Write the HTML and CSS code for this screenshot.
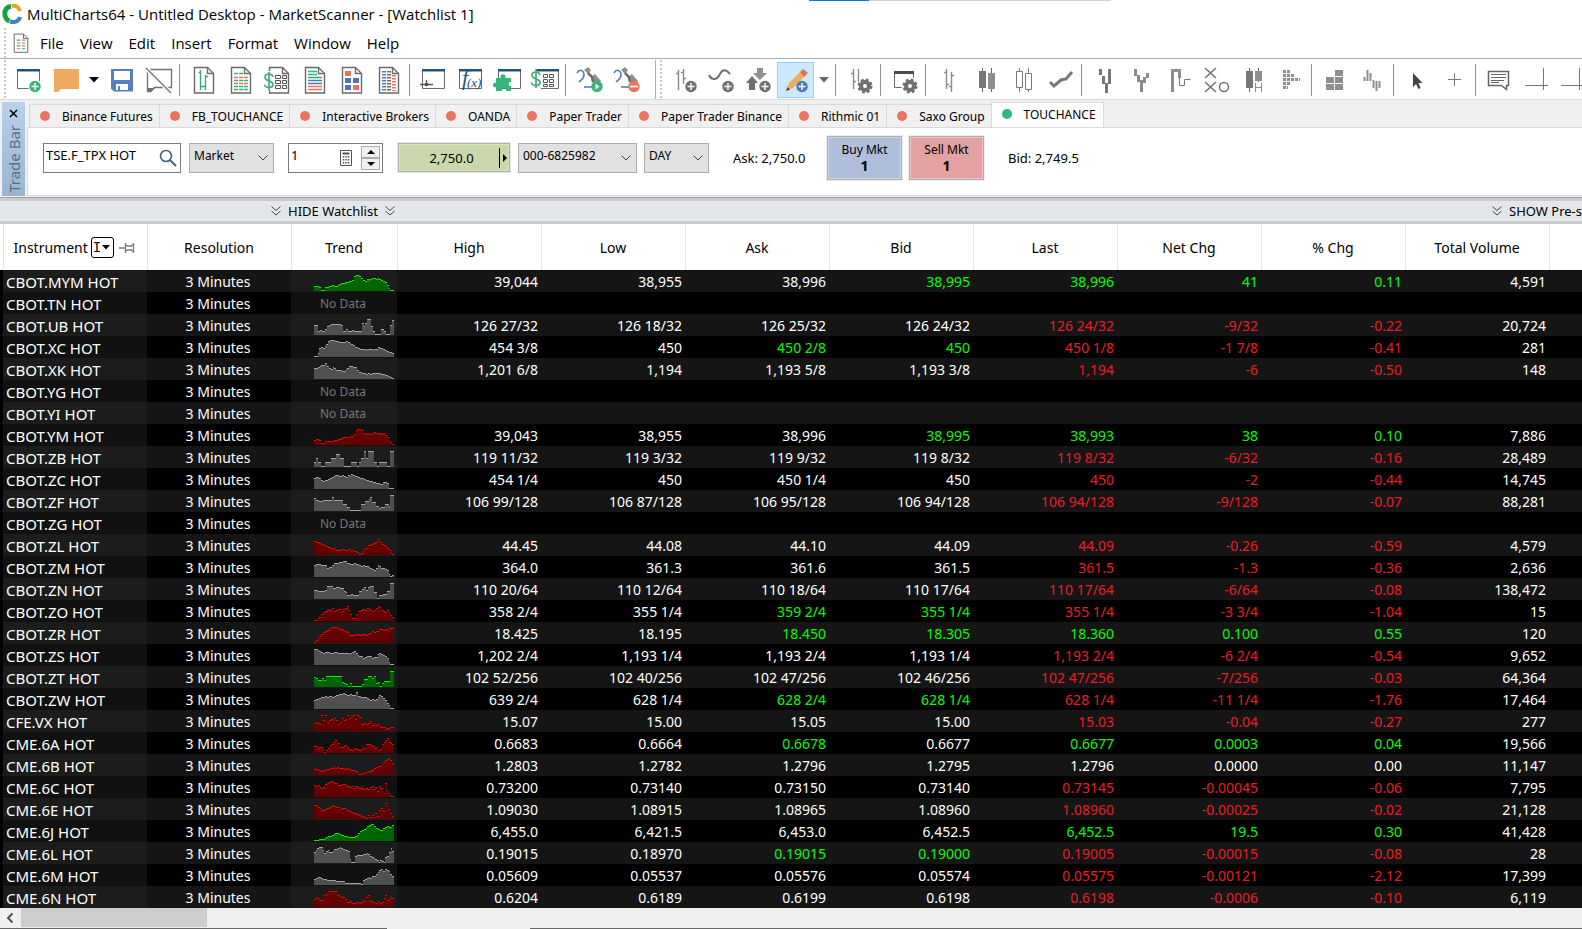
FILE: index.html
```html
<!DOCTYPE html>
<html lang="en">
<head>
    <meta charset="UTF-8">
    <meta name="viewport" content="width=device-width, initial-scale=1.0">
    <title>MultiCharts64 - Untitled Desktop</title>
    <link rel="stylesheet" href="styles.css">
</head>
<body>
    <svg class="defs" aria-hidden="true">
        <symbol id="page" viewBox="0 0 28 28">
            <path d="M4.5 1.5h13l6 6v19.5h-19z" fill="#fff" stroke="#6a6a6a" stroke-width="1.4"/>
            <path d="M17.5 1.5v6h6" fill="none" stroke="#6a6a6a" stroke-width="1.4"/>
        </symbol>
        <symbol id="window" viewBox="0 0 28 28">
            <path d="M2.5 4v18.500h22V4" fill="#fff" stroke="#6a6a6a"/>
            <path d="M2 3h23v2.500H2z" fill="#245374"/>
        </symbol>
        <symbol id="plus" viewBox="0 0 28 28">
            <circle cx="20" cy="20.500" r="5.700"/>
            <path d="M20 17v7M16.500 20.500h7" stroke="#fff" stroke-width="1.400"/>
        </symbol>
        <symbol id="gear" viewBox="0 0 28 28">
            <circle cx="19" cy="20" r="4" fill="none" stroke="#707070" stroke-width="4"/>
            <circle cx="19" cy="20" r="6" fill="none" stroke="#707070" stroke-width="3" stroke-dasharray="2.700 2"/>
        </symbol>
        <symbol id="bars" viewBox="0 0 28 28">
            <path d="M10.500 3v20M15.500 6v20M8 6.500h2M11 18.500h2M13 20.500h2M16 9.500h2" fill="none" stroke="#8a8a8a" stroke-width="1.400"/>
        </symbol>
        <symbol id="binoculars" viewBox="0 0 28 28">
            <path d="M8 4l4-3 3 3-3 4zM15 11l4-3 6 7-3 4-5-2z" fill="#8e8e8e"/>
            <path d="M12 7l4 4 1 5" fill="none" stroke="#6a6a6a" stroke-width="2.500"/>
            <path d="M1 7c3-5 7-2 7 2s-3 5-5 7M8 21h9" fill="none" stroke="#4f76b5" stroke-width="1.500"/>
        </symbol>
        <symbol id="chevrons" viewBox="0 0 12 12">
            <path d="M1.500 1.500L6 5.500l4.500-4M1.500 6L6 10l4.500-4" fill="none" stroke="#444"/>
        </symbol>
    </svg>

    <header class="titlebar">
        <svg class="logo" viewBox="0 0 20 20">
            <path d="M9 2.500C1 3 1 14.500 7.500 17" fill="none" stroke="#17a33b" stroke-width="5"/>
            <path d="M10 2c4-1 7 1.500 8 5" fill="none" stroke="#f39a25" stroke-width="4"/>
            <path d="M8 17.500c5 1.500 9-.5 10-4.500" fill="none" stroke="#3f83cc" stroke-width="4"/>
        </svg>
        <h1>MultiCharts64 - Untitled Desktop - MarketScanner - [Watchlist 1]</h1>
        <span class="dock-hint"></span>
    </header>

    <nav class="menubar">
        <span class="grip"></span>
        <svg class="doc" viewBox="0 0 28 28"><use href="#page"/><path d="M8 10h5M8 18h5M15 14h5M15 22h5" stroke="#2fb573" stroke-width="1.500"/><path d="M15 10h5M15 18h5M8 14h5M8 22h5" stroke="#e8735c" stroke-width="1.500"/></svg>
        <button>File</button>
        <button>View</button>
        <button>Edit</button>
        <button>Insert</button>
        <button>Format</button>
        <button>Window</button>
        <button>Help</button>
    </nav>

    <div class="toolbars">
        <div class="toolbar">
            <span class="grip"></span>
            <button class="tool" aria-label="New"><svg viewBox="0 0 28 28"><use href="#window"/><circle cx="20" cy="20.500" r="7" fill="#fff"/><use href="#plus" fill="#35b57a"/></svg></button>
            <button class="tool" aria-label="Open"><svg viewBox="0 0 28 28"><path d="M2 3h25v20H9l-3 3H2z" fill="#eeab60"/></svg></button>
            <button class="tool drop" aria-label="Open recent"><svg viewBox="0 0 10 6"><path d="M0 0h10L5 5.500z" fill="#000"/></svg></button>
            <button class="tool" aria-label="Save"><svg viewBox="0 0 28 28"><path d="M3 3h22v22.500H6l-3-3z" fill="#5580bd"/><path d="M6 5h16v9H6zM8 18h12v6H8z" fill="#fff"/><path d="M10 20h2v4h-2z" fill="#5580bd"/></svg></button>
            <button class="tool" aria-label="Close desktop"><svg viewBox="0 0 28 28"><path d="M2.500 3.500h24v18h-17l-4 4h-3z" fill="none" stroke="#707070" stroke-width="1.300"/><path d="M3 22h7l-4 4H3z" fill="#707070"/><path d="M1 2l25 25" stroke="#fff" stroke-width="4"/><path d="M1 2l25 25" stroke="#707070" stroke-width="1.300"/></svg></button>
            <span class="sep"></span>
            <button class="tool" aria-label="Chart"><svg viewBox="0 0 28 28"><use href="#page"/><path d="M10.500 4v20M15.500 9v15M8.500 6.500h2M11 20.500h2M13 20.500h2M16 10.500h2" stroke="#2fa873" stroke-width="1.300"/></svg></button>
            <button class="tool" aria-label="Scanner"><svg viewBox="0 0 28 28"><use href="#page"/><path d="M7 7.500h9M7 14.500h14M7 20.500h14M7 23.500h14" stroke="#2fb573" stroke-dasharray="4 1" stroke-width="1.500"/><path d="M7 11.500h14M7 17.500h14" stroke="#e8735c" stroke-dasharray="4 1" stroke-width="1.500"/></svg></button>
            <button class="tool" aria-label="Depth of market"><svg viewBox="0 0 28 28"><use href="#page" x="1"/><path d="M0 5h10v19H0z" fill="#fff"/><path d="M11.500 9.500h5v3h-5zM18.500 9.500h4v3h-4zM11.500 14.500h5v3h-5zM18.500 14.500h4v3h-4zM11.500 19.500h5v3h-5zM18.500 19.500h4v3h-4z" fill="none" stroke="#555"/><path d="M9 11c-1-4-8-4-8 0 0 5 8 3 8 7.500 0 4-8 4-8.500 0M5 6v18" fill="none" stroke="#44ac79" stroke-width="1.700"/></svg></button>
            <button class="tool" aria-label="Time and sales"><svg viewBox="0 0 28 28"><use href="#page"/><path d="M7 5.500h9M7 8.500h9M7 11.500h14" stroke="#2fb573" stroke-width="1.500"/><path d="M7 14.500h14M7 17.500h14" stroke="#4f76b5" stroke-width="1.500"/><path d="M7 20.500h14M7 23.500h14" stroke="#e8735c" stroke-width="1.500"/></svg></button>
            <button class="tool" aria-label="Portfolio"><svg viewBox="0 0 28 28"><use href="#page"/><path d="M7 5h6v5H7zM15 19h6v5h-6z" fill="#ea745c"/><path d="M7 12h6v5H7zM15 12h6v5h-6zM7 19h6v5H7z" fill="#4f76b5"/></svg></button>
            <button class="tool" aria-label="Order tracker"><svg viewBox="0 0 28 28"><use href="#page"/><g stroke-width="4" stroke-dasharray="1.500 1.500"><path d="M9 5v20" stroke="#4f76b5"/><path d="M14 5v20" stroke="#666"/><path d="M19 9v16" stroke="#e8735c"/></g></svg></button>
            <span class="sep"></span>
            <button class="tool" aria-label="Quote"><svg viewBox="0 0 28 28"><use href="#window"/><path d="M0 18.500h13M6.500 14v6" stroke="#555" stroke-width="1.300"/><circle cx="6.500" cy="18.500" r="1.800" fill="#245374"/></svg></button>
            <button class="tool" aria-label="Function"><svg viewBox="0 0 28 28"><use href="#window"/><text x="5" y="19" class="fx">f</text><text x="10" y="21" class="fx small">(x)</text></svg></button>
            <button class="tool" aria-label="Plugin"><svg viewBox="0 0 28 28"><use href="#window" x="2"/><path d="M2 12h5c-3-5 7-5 4 0h6v4c-3-1-3 5 0 4v5h-5c1-4-5-4-4 0H2v-4c-4 2-4-6 0-4z" fill="#35b57a"/></svg></button>
            <button class="tool" aria-label="Order entry"><svg viewBox="0 0 28 28"><use href="#window" x="3"/><path d="M0 6h10v18H0z" fill="#fff"/><path d="M12.500 8.500h4v3h-4zM18.500 8.500h4v3h-4zM12.500 13.500h4v3h-4zM18.500 13.500h4v3h-4zM12.500 18.500h4v2h-4zM18.500 18.500h4v2h-4z" fill="none" stroke="#555"/><path d="M9 9c-1-4-8-4-8 0 0 5 8 3 8 7.500 0 4-8 4-8.500 0M5 3v19" fill="none" stroke="#44ac79" stroke-width="1.700"/></svg></button>
            <span class="sep"></span>
            <button class="tool" aria-label="Start scan"><svg viewBox="0 0 28 28"><use href="#binoculars"/><circle cx="21" cy="20.500" r="5.700" fill="#35b57a"/><path d="M19.500 17.500v6l4-3z" fill="#fff"/></svg></button>
            <button class="tool" aria-label="Stop scan"><svg viewBox="0 0 28 28"><use href="#binoculars"/><circle cx="21" cy="20.500" r="5.700" fill="#ea745c"/><path d="M17 20.500h8" stroke="#fff" stroke-width="1.600"/></svg></button>
        </div>
        <div class="toolbar second">
            <span class="grip"></span>
            <button class="tool" aria-label="Add instrument"><svg viewBox="0 0 28 28"><path d="M7.500 4v20M12.500 3v15M5 7.500h2M10 6.500h2M13 12.500h2" stroke="#8a8a8a" stroke-width="1.400"/><use href="#plus" fill="#707070"/></svg></button>
            <button class="tool" aria-label="Add study"><svg viewBox="0 0 28 28"><path d="M1 9c3 6 8 5 11-1s7-4 10 0" fill="none" stroke="#707070" stroke-width="2"/><use href="#plus" fill="#707070"/></svg></button>
            <button class="tool" aria-label="Add signal"><svg viewBox="0 0 28 28"><path d="M12 2h6v5h4l-7 7-7-7h4z" fill="#909090"/><path d="M1 17l6-7 6 7h-3v7H4v-7z" fill="#707070"/><circle cx="20" cy="20.500" r="6.500" fill="#fff"/><use href="#plus" fill="#707070"/></svg></button>
            <button class="tool active" aria-label="Drawing"><svg viewBox="0 0 28 28"><path d="M4 25l3-8L18 6l4 5-11 11z" fill="#efad62"/><path d="M18 6l3-3 5 4-4 4z" fill="#ea6d57"/><path d="M4 25l1.500-4 2.500 2.500z" fill="#444"/><use href="#plus" fill="#4f76b5"/></svg></button>
            <button class="tool drop" aria-label="Drawing tools"><svg viewBox="0 0 10 6"><path d="M0 0h10L5 5.500z" fill="#666"/></svg></button>
            <span class="sep"></span>
            <button class="tool" aria-label="Format instrument"><svg viewBox="0 0 28 28"><path d="M7.500 3v20M12.500 3v13M5 7.500h2M8 15.500h2" stroke="#8a8a8a" stroke-width="1.400"/><use href="#gear"/></svg></button>
            <span class="sep"></span>
            <button class="tool" aria-label="Format window"><svg viewBox="0 0 28 28"><path d="M3.500 6v15.500h7M22.500 6v6" fill="none" stroke="#666"/><path d="M3 5h20v3H3z" fill="#4b4b4b"/><use href="#gear"/></svg></button>
            <span class="sep"></span>
            <button class="tool" aria-label="Bars"><svg viewBox="0 0 28 28"><use href="#bars"/></svg></button>
            <button class="tool" aria-label="Candles"><svg viewBox="0 0 28 28"><path d="M9.500 2v24M18.500 2v24" stroke="#666"/><path d="M6 5h7v17H6z" fill="#777"/><path d="M15 7h7v16h-7z" fill="#8e8e8e"/></svg></button>
            <button class="tool" aria-label="Hollow candles"><svg viewBox="0 0 28 28"><path d="M9.500 2v24M18.500 2v24" stroke="#777"/><path d="M6.500 5.500h6v16h-6zM15.500 7.500h6v16h-6z" fill="#fff" stroke="#777"/></svg></button>
            <button class="tool" aria-label="Line"><svg viewBox="0 0 28 28"><path d="M3 16l4 4 7-6 5-1 6-7" fill="none" stroke="#777" stroke-width="3"/></svg></button>
            <span class="sep"></span>
            <button class="tool" aria-label="Kagi"><svg viewBox="0 0 28 28"><path d="M8.500 3v6M11.500 10v8M14.500 17v10M17.500 3v15" stroke="#777" stroke-width="3"/></svg></button>
            <button class="tool" aria-label="Line break"><svg viewBox="0 0 28 28"><path d="M6.500 3v7M9.500 9v7M12.500 14v12M15.500 11v6M18.500 7v5" stroke="#8a8a8a" stroke-width="3"/></svg></button>
            <button class="tool" aria-label="Renko"><svg viewBox="0 0 28 28"><path d="M6.500 26V4.500h7V12" fill="none" stroke="#8e8e8e" stroke-width="3"/><path d="M13.500 12v7.500h5v-6h6" fill="none" stroke="#777"/></svg></button>
            <button class="tool" aria-label="Point and figure"><svg viewBox="0 0 28 28"><path d="M2 2l11 10M13 2L2 12M2 16l11 10M13 16L2 26" stroke="#707070" stroke-width="1.500"/><circle cx="21" cy="21" r="4.500" fill="none" stroke="#707070" stroke-width="1.500"/></svg></button>
            <button class="tool" aria-label="Heikin-Ashi"><svg viewBox="0 0 28 28"><path d="M9.500 2v24M18.500 2v14" stroke="#666"/><path d="M6 5h7v17H6z" fill="#777"/><path d="M15 5h7v10h-7z" fill="#8e8e8e"/><path d="M15.500 17v9M21.500 17v9M15.500 21.500h6" stroke="#8e8e8e"/></svg></button>
            <button class="tool" aria-label="Volume profile"><svg viewBox="0 0 28 28"><g stroke="#8e8e8e" stroke-width="3" stroke-dasharray="3 1"><path d="M6 5.500h8M6 9.500h12M6 13.500h17M6 17.500h8M6 21.500h5"/></g></svg></button>
            <span class="sep"></span>
            <button class="tool" aria-label="Arrange"><svg viewBox="0 0 28 28"><path d="M13 4h8v6h-8zM4 11h8v6H4zM13 11h8v6h-8zM4 18h8v6H4zM13 18h8v6h-8z" fill="#8e8e8e"/></svg></button>
            <button class="tool" aria-label="Compress"><svg viewBox="0 0 28 28"><path d="M5.500 11v4M8.500 4v11M11.500 7v8M14.500 14v8M17.500 15v10M20.500 15v7" stroke="#8e8e8e" stroke-width="2"/></svg></button>
            <span class="sep"></span>
            <button class="tool" aria-label="Pointer"><svg viewBox="0 0 28 28"><path d="M9 7v14l3-3 2.500 5 2-1-2-5h4z" fill="#444"/></svg></button>
            <button class="tool" aria-label="Crosshair"><svg viewBox="0 0 28 28"><path d="M13.500 7v13M7 13.500h13" stroke="#777"/></svg></button>
            <span class="sep"></span>
            <button class="tool" aria-label="Note"><svg viewBox="0 0 28 28"><path d="M2.500 5.500h20v14h-2v4l-5-4h-13z" fill="none" stroke="#666" stroke-width="1.500"/><path d="M5 8.500h15M5 11.500h15M5 14.500h13M5 16.500h8" stroke="#666"/></svg></button>
            <button class="tool" aria-label="Price line"><svg viewBox="0 0 28 28"><path d="M2 19.500h23M20.500 2v22" stroke="#777"/></svg></button>
            <button class="tool" aria-label="Time line"><svg viewBox="0 0 28 28"><path d="M1 19.500h24M19.500 2v22" stroke="#777"/></svg></button>
        </div>
    </div>

    <section class="tradebar">
        <div class="side">
            <button aria-label="Close trade bar"><svg viewBox="0 0 9 9"><path d="M1 1l7 7M8 1L1 8" stroke="#000" stroke-width="1.500"/></svg></button>
            <span>Trade Bar</span>
        </div>
        <div class="trade">
            <div class="tabs" role="tablist">
                <button class="tab" role="tab">Binance Futures</button>
                <button class="tab" role="tab">FB_TOUCHANCE</button>
                <button class="tab" role="tab">Interactive Brokers</button>
                <button class="tab" role="tab">OANDA</button>
                <button class="tab" role="tab">Paper Trader</button>
                <button class="tab" role="tab">Paper Trader Binance</button>
                <button class="tab" role="tab">Rithmic 01</button>
                <button class="tab" role="tab">Saxo Group</button>
                <button class="tab online" role="tab" aria-selected="true">TOUCHANCE</button>
            </div>
            <form class="order">
                <div class="field symbol">
                    <input type="text" value="TSE.F_TPX HOT" aria-label="Symbol">
                    <svg viewBox="0 0 18 18"><circle cx="7" cy="7" r="5.500" fill="none" stroke="#3f6384" stroke-width="1.600"/><path d="M11 11l6 6" stroke="#3f6384" stroke-width="2"/></svg>
                </div>
                <select class="type" aria-label="Order type"><option>Market</option></select>
                <div class="field qty">
                    <input type="text" value="1" aria-label="Quantity">
                    <svg class="calc" viewBox="0 0 12 16"><path d="M.5.5h11v15H.5z" fill="#fff" stroke="#555"/><path d="M2.500 3.500h7" stroke="#555" stroke-width="2"/><path d="M3.500 6v8M6 6v8M8.500 6v8" stroke="#555" stroke-width="1.500" stroke-dasharray="1.500 1.500"/></svg>
                    <div class="spin">
                        <button type="button" aria-label="Increase"><svg viewBox="0 0 8 4"><path d="M4 0l4 4H0z"/></svg></button>
                        <button type="button" aria-label="Decrease"><svg viewBox="0 0 8 4"><path d="M4 4l4-4H0z"/></svg></button>
                    </div>
                </div>
                <button type="button" class="price"><span>2,750.0</span><svg viewBox="0 0 8 20"><path d="M.5 0v20" stroke="#000"/><path d="M4 6l4 4-4 4z"/></svg></button>
                <select class="account" aria-label="Account"><option>000-6825982</option></select>
                <select class="tif" aria-label="Time in force"><option>DAY</option></select>
                <span class="quote">Ask: 2,750.0</span>
                <button type="button" class="mkt buy">Buy Mkt<b>1</b></button>
                <button type="button" class="mkt sell">Sell Mkt<b>1</b></button>
                <span class="quote last">Bid: 2,749.5</span>
            </form>
        </div>
    </section>

    <div class="panelbar">
        <button class="hide-list"><svg viewBox="0 0 12 12"><use href="#chevrons"/></svg>HIDE Watchlist<svg viewBox="0 0 12 12"><use href="#chevrons"/></svg></button>
        <button><svg viewBox="0 0 12 12"><use href="#chevrons"/></svg>SHOW Pre-s</button>
    </div>

    <main class="watchlist">
        <table>
            <colgroup>
                <col class="edge"><col><col><col class="c-trend"><col><col><col><col><col><col><col><col><col class="rest">
            </colgroup>
            <thead>
                <tr>
                    <th></th>
                    <th>
                        <div class="instrument">
                            Instrument
                            <button class="sort" aria-label="Sort">I<svg viewBox="0 0 8 5"><path d="M0 0h8L4 4.500z"/></svg></button>
                            <svg class="pin" viewBox="0 0 16 12"><path d="M0 6h6M6.500 1v10M6.500 3l2 1h4l2-2v8l-2-2h-4l-2 1" fill="none" stroke="#777" stroke-width="1.300"/></svg>
                        </div>
                    </th>
                    <th>Resolution</th>
                    <th>Trend</th>
                    <th>High</th>
                    <th>Low</th>
                    <th>Ask</th>
                    <th>Bid</th>
                    <th>Last</th>
                    <th>Net Chg</th>
                    <th>% Chg</th>
                    <th>Total Volume</th>
                    <th></th>
                </tr>
            </thead>
            <tbody id="rows"></tbody>
        </table>
    </main>

    <footer class="scrollbar">
        <button aria-label="Scroll left"><svg viewBox="0 0 8 12"><path d="M6.500 1.500L2 6l4.500 4.500" fill="none" stroke="#505050" stroke-width="2"/></svg></button>
        <span class="thumb"></span>
    </footer>
    <div class="bottom-edge"><span></span><span></span></div>

    <script>
        // name | high | low | ask | bid | last | net | pct | volume | trend colour | trend heights (base 36)
        // a leading + or ~ on ask, bid or last marks an up or down tick
        const quotes = [
            'CBOT.MYM HOT|39,044|38,955|38,996|+38,995|+38,996|41|0.11|4,591|up|5554114455655678899aabfggfdbacbcddcdcba96311',
            'CBOT.TN HOT',
            'CBOT.UB HOT|126 27/32|126 18/32|126 25/32|126 24/32|~126 24/32|-9/32|-0.22|20,724|flat|aa454469abbbbba4464454444c9cgg9411166411af',
            'CBOT.XC HOT|454 3/8|450|+450 2/8|+450|~450 1/8|-1 7/8|-0.41|281|flat|1149a9bdghhhggffffgfedcaa98887888788a99876554',
            'CBOT.XK HOT|1,201 6/8|1,194|1,193 5/8|1,193 3/8|~1,194|-6|-0.50|148|flat|bbcdeegdbacb99988abddcc97766565666665544321',
            'CBOT.YG HOT',
            'CBOT.YI HOT',
            'CBOT.YM HOT|39,043|38,955|38,996|+38,995|+38,993|38|0.10|7,886|down|5665224444455667888899bfggfcbcbbcdcbcbca8531',
            'CBOT.ZB HOT|119 11/32|119 3/32|119 9/32|119 8/32|~119 8/32|-6/32|-0.16|28,489|flat|595511555999dd9911115551599g9ggg551555511gg',
            'CBOT.ZC HOT|454 1/4|450|450 1/4|450|~450|-2|-0.44|14,745|flat|bccb9899abcdeeddedcedfeddcbba9988776655776111',
            'CBOT.ZF HOT|106 99/128|106 87/128|106 95/128|106 94/128|~106 94/128|-9/128|-0.07|88,281|flat|dbbaabbbbbebbbbb774411111177aace9955344775gg',
            'CBOT.ZG HOT',
            'CBOT.ZL HOT|44.45|44.08|44.10|44.09|~44.09|-0.26|-0.59|4,579|down|eddcbaa988775555665564544312467aabcdegdba97531',
            'CBOT.ZM HOT|364.0|361.3|361.6|361.5|~361.5|-1.3|-0.36|2,636|flat|cdddccc9aaceeeffggeeddeddcbcbba9879cb9987312',
            'CBOT.ZN HOT|110 20/64|110 12/64|110 18/64|110 17/64|~110 17/64|-6/64|-0.08|138,472|flat|9988889dddbbccbb8744544488ac9cdd771445588gg',
            'CBOT.ZO HOT|358 2/4|355 1/4|+359 2/4|+355 1/4|~355 1/4|-3 3/4|-1.04|15|down|113479abcbdabccacdfb7337aabcbdbcabdfeba9b864',
            'CBOT.ZR HOT|18.425|18.195|+18.450|+18.305|+18.360|0.100|0.55|120|down|13579bcdefgggfeedcb98889989989aacbcceededfff',
            'CBOT.ZS HOT|1,202 2/4|1,193 1/4|1,193 2/4|1,193 1/4|~1,193 2/4|-6 2/4|-0.54|9,652|flat|ggfedcdddccddccccccbcdeca9978999788bcba97311',
            'CBOT.ZT HOT|102 52/256|102 40/256|102 47/256|102 46/256|~102 47/256|-7/256|-0.03|64,364|up|a97797bbbbbbbb5431411111388bb9b4514666gg',
            'CBOT.ZW HOT|639 2/4|628 1/4|+628 2/4|+628 1/4|~628 1/4|-11 1/4|-1.76|17,464|flat|9aabccdcddcdeeffgfeefeehddcccba9a9acedb96411',
            'CFE.VX HOT|15.07|15.00|15.05|15.00|~15.03|-0.04|-0.27|277|down|8987gbg9bcbdb79dbcgdfgcge87878a686754423344',
            'CME.6A HOT|0.6683|0.6664|+0.6678|0.6677|+0.6677|0.0003|0.04|19,566|down|77566413579bdba6678644354434759998756349bdfba9',
            'CME.6B HOT|1.2803|1.2782|1.2796|1.2795|1.2796|0.0000|0.00|11,147|down|66554556677878777676655431122344567899bdfghfc',
            'CME.6C HOT|0.73200|0.73140|0.73150|0.73140|~0.73145|-0.00045|-0.06|7,795|down|cbca9adefgfeeccddcbab9ba9b9898ab8a6b94e7421',
            'CME.6E HOT|1.09030|1.08915|1.08965|1.08960|~1.08960|-0.00025|-0.02|21,128|down|eecb99abcdedccabba987665433214242639b8gda63',
            'CME.6J HOT|6,455.0|6,421.5|6,453.0|6,452.5|+6,452.5|19.5|0.30|41,428|up|11122234556788766554444568abcdfghhfdcbbdefeeg',
            'CME.6L HOT|0.19015|0.18970|+0.19015|+0.19000|~0.19005|-0.00015|-0.08|28|flat|bdfggdacdbbceefgfeddc4117888899a976543132167bfc',
            'CME.6M HOT|0.05609|0.05537|0.05576|0.05574|~0.05575|-0.00121|-2.12|17,399|flat|6788766555554444422222222215678799bdfgegfeb9',
            'CME.6N HOT|0.6204|0.6189|0.6199|0.6198|~0.6198|-0.0006|-0.10|6,119|down|8a9777cdgfgggdcbaa856544554576ac765426459c79b9'
        ];

        function trend(colour, heights) {
            let area = 'M0 18', tops = '';
            for (let i = 0; i < heights.length; i++) {
                const x = Math.round(i * 80 / heights.length);
                const next = Math.round((i + 1) * 80 / heights.length);
                const y = 18 - parseInt(heights[i], 36);
                area += `V${y}H${next}`;
                tops += `M${x} ${y}h${next - x}v1h${x - next}z`;
            }
            return `<svg class="trend ${colour}" viewBox="0 0 80 18"><path class="area" d="${area}V18z"/><path class="tops" d="${tops}"/></svg>`;
        }

        function sign(value) {
            if (value.startsWith('-')) return 'neg';
            return parseFloat(value) > 0 ? 'pos' : '';
        }

        document.getElementById('rows').innerHTML = quotes.map(line => {
            const [name, high, low, ask, bid, last, net, pct, volume, colour, heights] = line.split('|');
            const start = `<td></td><td class="name">${name}</td><td class="resolution">3 Minutes</td>`;
            if (!high) {
                return `<tr>${start}<td class="chart"><span>No Data</span></td>${'<td></td>'.repeat(9)}</tr>`;
            }
            const ticks = [high, low, ask, bid, last].map(v => {
                const cls = v[0] === '+' ? 'pos' : v[0] === '~' ? 'neg' : '';
                return `<td class="${cls}">${v.replace(/^[+~]/, '')}</td>`;
            }).join('');
            const changes = [net, pct].map(v => `<td class="${sign(v)}">${v}</td>`).join('');
            return `<tr>${start}<td class="chart">${trend(colour, heights)}</td>${ticks}${changes}<td>${volume}</td><td></td></tr>`;
        }).join('');
    </script>
</body>
</html>
```
FILE: styles.css
```css
* {
    box-sizing: border-box;
}
body {
    margin: 0;
    height: 100vh;
    display: flex;
    flex-direction: column;
    overflow: hidden;
    background: #fff;
    color: #000;
    font-family: "Noto Sans", sans-serif;
    font-size: 14px;
}
button, input, select {
    font: inherit;
    color: inherit;
}
button {
    background: none;
    border: none;
    padding: 0;
}
svg {
    display: block;
    flex: none;
}
.defs {
    position: absolute;
    width: 0;
    height: 0;
}

/* title and menu */
.titlebar {
    position: relative;
    display: flex;
    align-items: center;
    gap: 5px;
    height: 28px;
    flex: none;
    padding-left: 2px;
}
.logo {
    width: 20px;
    height: 20px;
}
.titlebar h1 {
    margin: 0;
    font: 15px "Open Sans", sans-serif;
}
.dock-hint {
    position: absolute;
    top: 0;
    left: 809px;
    width: 302px;
    height: 1px;
    background: #d0d0d0;
    border-left: 60px solid #0078d7;
}
.menubar {
    display: flex;
    align-items: center;
    height: 30px;
    flex: none;
    font: 15px "Open Sans", sans-serif;
}
.menubar button {
    margin-right: 16px;
}
.doc {
    width: 20px;
    height: 20px;
    margin: 0 9px 0 5px;
}
.grip {
    width: 2px;
    margin-left: 4px;
    align-self: stretch;
    background: repeating-linear-gradient(#c4c4c4 0 2px, #fff 2px 4px);
}

/* toolbars */
.toolbars {
    display: flex;
    height: 42px;
    flex: none;
    padding-top: 1px;
    border-top: 1px solid #a9adb3;
    border-bottom: 1px solid #d9d9d9;
    overflow: hidden;
}
.toolbar {
    display: flex;
    align-items: center;
    flex: none;
}
.toolbar .grip {
    margin-right: 4px;
}
.toolbar.second {
    margin-left: 10px;
    border-left: 1px solid #b0b0b0;
}
.tool {
    display: flex;
    align-items: center;
    justify-content: center;
    width: 37px;
    height: 36px;
    flex: none;
}
.tool svg {
    width: 28px;
    height: 28px;
    overflow: visible;
}
.tool.drop {
    width: 19px;
}
.tool.drop svg {
    width: 10px;
    height: 6px;
}
.tool.active {
    background: #cce8ff;
    border: 1px solid #99d1ff;
}
.sep {
    width: 1px;
    height: 32px;
    margin: 0 5px 0 2px;
    background: #8f8f8f;
}
.fx {
    font: italic 22px "Liberation Serif", serif;
    fill: #245374;
}
.fx.small {
    font-size: 13px;
}

/* trade bar */
.tradebar {
    display: flex;
    gap: 2px;
    height: 98px;
    flex: none;
    padding: 2px 0 1px 2px;
    background: #f0f0f0;
    border-bottom: 1px solid #a0a0a0;
}
.side {
    display: flex;
    flex-direction: column;
    align-items: center;
    justify-content: space-between;
    width: 23px;
    padding: 7px 0 3px;
    background: linear-gradient(#b9d1ea, #99b4d1);
    color: #5d6d80;
    font-size: 15px;
}
.side svg {
    width: 9px;
    height: 9px;
}
.side span {
    writing-mode: vertical-rl;
    transform: rotate(180deg);
}
.trade {
    flex: 1;
    display: flex;
    flex-direction: column;
}
.tabs {
    display: flex;
    align-items: flex-end;
    height: 25px;
    padding-left: 2px;
    font-size: 12px;
}
.tab {
    display: flex;
    align-items: center;
    gap: 12px;
    height: 23px;
    padding: 0 6px 0 10px;
    border: 1px solid #d9d9d9;
    border-width: 1px 0 0 1px;
    white-space: nowrap;
}
.tab::before {
    content: "";
    width: 10px;
    height: 10px;
    border-radius: 50%;
    background: #ea745c;
}
.tab.online {
    height: 25px;
    padding-right: 7px;
    padding-bottom: 2px;
    background: #fff;
    border-right-width: 1px;
}
.tab.online::before {
    background: #35b57a;
}
.order {
    flex: 1;
    display: flex;
    align-items: center;
    padding: 0 0 8px 15px;
    background: #fff;
    border: 1px solid #d9d9d9;
    border-right: none;
    font-size: 12px;
}
.field {
    display: flex;
    align-items: center;
    height: 30px;
    background: #fff;
    border: 1px solid #7a7a7a;
}
.field input {
    flex: 1;
    min-width: 0;
    height: 100%;
    padding: 0 0 6px 2px;
    border: none;
    background: none;
    font-size: 13px;
}
.symbol {
    width: 138px;
    margin-right: 8px;
    padding-right: 3px;
}
.symbol svg {
    width: 18px;
    height: 18px;
}
.order select {
    appearance: none;
    height: 30px;
    padding: 0 20px 5px 4px;
    border: 1px solid #acacac;
    border-radius: 0;
    background: #e1e1e1 url("data:image/svg+xml,%3Csvg xmlns='http://www.w3.org/2000/svg' width='10' height='6'%3E%3Cpath d='M.5.5L5 5 9.500.5' fill='none' stroke='%23444'/%3E%3C/svg%3E") no-repeat right 5px center;
}
.type {
    width: 85px;
    margin-right: 14px;
}
.qty {
    width: 95px;
    margin-right: 15px;
    padding-right: 2px;
}
.calc {
    width: 12px;
    height: 16px;
}
.spin {
    display: flex;
    flex-direction: column;
    margin-left: 9px;
}
.spin button {
    display: flex;
    align-items: center;
    justify-content: center;
    width: 19px;
    height: 12px;
    border: 1px solid #acacac;
    background: #f0f0f0;
}
.spin svg {
    width: 8px;
    height: 4px;
}
.price {
    display: flex;
    align-items: center;
    width: 112px;
    height: 29px;
    margin-right: 8px;
    padding-right: 2px;
    border: 1px solid #adadad;
    outline: 1px solid #e8e8e8;
    background: #cad7ab;
    box-shadow: inset 0 0 0 1px #dbe4c6;
    font-size: 13px;
}
.price span {
    flex: 1;
    padding-left: 5px;
}
.price svg {
    width: 8px;
    height: 20px;
}
.account {
    width: 119px;
    margin-right: 7px;
}
.tif {
    width: 65px;
}
.quote {
    width: 118px;
    padding-left: 24px;
    font-size: 13px;
    white-space: nowrap;
}
.mkt {
    width: 75px;
    height: 44px;
    margin-right: 7px;
    border: 1px solid #adadad;
    outline: 1px solid #ececec;
}
.mkt b {
    display: block;
    font-size: 14px;
    line-height: 16px;
}
.buy {
    background: #b0bede;
    box-shadow: inset 0 0 0 1px #ccd5ea;
}
.sell {
    background: #e4a1a1;
    box-shadow: inset 0 0 0 1px #eec4c4;
}
.quote.last {
    padding-left: 17px;
}

/* watchlist */
.panelbar {
    display: flex;
    justify-content: space-between;
    height: 26px;
    flex: none;
    padding-left: 270px;
    background: #e4e7ea;
    border-top: 3px solid #cacccf;
    border-bottom: 3px solid #cacccf;
    font-size: 13px;
}
.panelbar button {
    display: flex;
    align-items: center;
    gap: 6px;
}
.panelbar svg {
    width: 12px;
    height: 12px;
}
.watchlist {
    flex: 1;
    min-height: 0;
    overflow: hidden;
    background: #000;
}
table {
    width: 100%;
    table-layout: fixed;
    border-collapse: collapse;
}
col {
    width: 144px;
}
.edge {
    width: 3px;
}
.c-trend {
    width: 106px;
}
.rest {
    width: auto;
}
th {
    height: 46px;
    padding: 1px 0 0;
    background: #fff;
    border-left: 1px solid #e5e5e5;
    font-weight: normal;
}
th:first-child {
    border: none;
}
.instrument {
    display: flex;
    align-items: center;
    gap: 3px;
    padding-left: 10px;
}
.sort {
    display: flex;
    align-items: center;
    gap: 1px;
    height: 21px;
    padding: 0 3px 0 1px;
    border: 1px solid #000;
    border-radius: 3px;
    font-family: "Liberation Mono", monospace;
}
.sort svg {
    width: 8px;
    height: 5px;
}
.pin {
    width: 16px;
    height: 12px;
    margin-left: 2px;
}
td {
    height: 22px;
    padding: 2px 3px 0 0;
    color: #fff;
    text-align: right;
    white-space: nowrap;
    line-height: 20px;
}
tbody tr:nth-child(odd) {
    background: #151515;
}
tbody td:first-child {
    background: #000;
}
.name, .chart {
    background: #111;
}
tr:nth-child(odd) .name, tr:nth-child(odd) .chart {
    background: #1c1c1c;
}
.name {
    padding-left: 3px;
    font-size: 15px;
    text-align: left;
}
.resolution {
    padding-right: 2px;
    text-align: center;
}
.chart {
    padding-right: 2px;
    color: #777;
    font-size: 12px;
    text-align: center;
}
.trend {
    width: 80px;
    height: 18px;
    margin-left: 23px;
    shape-rendering: crispEdges;
}
.flat .area { fill: #505050; }
.flat .tops { fill: #a0a0a0; }
.up .area { fill: #006400; }
.up .tops { fill: #00f000; }
.down .area { fill: #640000; }
.down .tops { fill: #f00000; }
.pos {
    color: #00ff00;
}
.neg {
    color: #ed1c24;
}

/* scrollbar */
.scrollbar {
    display: flex;
    height: 19px;
    flex: none;
    background: #f0f0f0;
}
.scrollbar button {
    width: 21px;
    padding-left: 6px;
}
.scrollbar svg {
    width: 8px;
    height: 12px;
}
.thumb {
    width: 186px;
    background: #cdcdcd;
}
.bottom-edge {
    display: flex;
    gap: 143px;
    height: 2px;
    flex: none;
    background: #f0f0f0;
}
.bottom-edge span {
    width: 387px;
    border-bottom: 1px solid #696969;
}
.bottom-edge span:last-child {
    flex: 1;
}
```
